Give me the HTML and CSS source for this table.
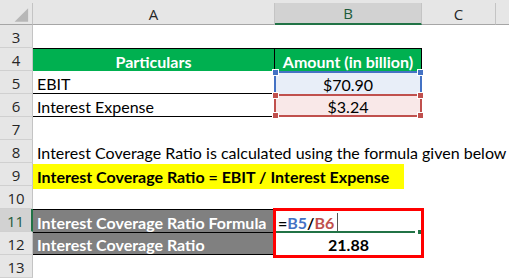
FILE: index.html
```html
<!DOCTYPE html>
<html>
<head>
<meta charset="utf-8">
<link rel="stylesheet" href="styles.css">
</head>
<body>
<div class="sheet">
  <div class="corner"><svg width="33" height="22" viewBox="0 0 33 22"><polygon points="29,5 29,19 15,19" fill="#b7b7b7"/></svg></div>
  <div class="colhead">A</div>
  <div class="colhead sel">B</div>
  <div class="colhead">C</div>
  <div class="colhead last"></div>

  <div class="rowhead">3</div><div class="cell"></div><div class="cell"></div><div class="cell"></div><div class="cell"></div>

  <div class="rowhead">4</div>
  <div class="cell green b-top b-right center bold">Particulars</div>
  <div class="cell green b-top b-right center bold">Amount (in billion)</div>
  <div class="cell"></div><div class="cell"></div>

  <div class="rowhead">5</div>
  <div class="cell b-bottom">EBIT</div>
  <div class="cell ref ref-blue center">$70.90<i class="h tl"></i><i class="h tr"></i></div>
  <div class="cell"></div><div class="cell"></div>

  <div class="rowhead">6</div>
  <div class="cell b-bottom">Interest Expense</div>
  <div class="cell ref ref-red center">$3.24<i class="h tl red"></i><i class="h tr red"></i><i class="h bl red"></i><i class="h br red"></i></div>
  <div class="cell"></div><div class="cell"></div>

  <div class="rowhead">7</div><div class="cell"></div><div class="cell"></div><div class="cell"></div><div class="cell"></div>

  <div class="rowhead">8</div>
  <div class="cell span4">Interest Coverage Ratio is calculated using the formula given below</div>

  <div class="rowhead">9</div>
  <div class="cell span4"><span class="yellow">Interest Coverage Ratio = EBIT / Interest Expense</span></div>

  <div class="rowhead">10</div><div class="cell"></div><div class="cell"></div><div class="cell"></div><div class="cell"></div>

  <div class="rowhead selrow">11</div>
  <div class="cell gray b-top bold">Interest Coverage Ratio Formula</div>
  <div class="cell box-top bold formula"><span>=</span><span class="fb">B5</span><span>/</span><span class="fr">B6</span><span class="caret"></span><i class="fill-handle"></i></div>
  <div class="cell"></div><div class="cell"></div>

  <div class="rowhead">12</div>
  <div class="cell gray b-top b-bottom bold">Interest Coverage Ratio</div>
  <div class="cell box-bottom bold center">21.88</div>
  <div class="cell"></div><div class="cell"></div>

  <div class="rowhead">13</div><div class="cell"></div><div class="cell"></div><div class="cell"></div><div class="cell"></div>
</div>
</body>
</html>
```

FILE: styles.css
```css
html, body {
  margin: 0;
  padding: 0;
  background: #ffffff;
}
body {
  font-family: Lato, "Open Sans", sans-serif;
  font-size: 16px;
  color: #000;
  overflow: hidden;
}
.sheet {
  display: grid;
  grid-template-columns: 33px 242px 147px 74px 13px;
  grid-template-rows: 22px repeat(11, 23px);
  border-top: 3px solid #e6e6e6;
  width: 509px;
}
.corner {
  background: #e6e6e6;
  border-right: 1px solid #c4c4c4;
  border-bottom: 1px solid #a6a6a6;
  box-sizing: border-box;
  display: flex;
}
.colhead {
  background: #e6e6e6;
  border-right: 1px solid #c4c4c4;
  border-bottom: 1px solid #a6a6a6;
  box-sizing: border-box;
  display: flex;
  align-items: center;
  justify-content: center;
  color: #262626;
  font-family: "Open Sans", sans-serif;
  font-size: 15px;
}
.colhead.sel {
  background: #d2d2d2;
  border-bottom: 2px solid #217346;
  color: #1e5b3a;
}
.colhead.last { border-right: none; }
.rowhead {
  background: #e6e6e6;
  border-right: 1px solid #c4c4c4;
  border-bottom: 1px solid #d0d0d0;
  box-sizing: border-box;
  display: flex;
  align-items: center;
  justify-content: center;
  color: #262626;
  font-family: "Open Sans", sans-serif;
  font-size: 15px;
  padding-top: 1px;
}
.rowhead.selrow {
  background: #d2d2d2;
  border-right: 2px solid #217346;
  color: #1e5b3a;
}
.cell {
  box-sizing: border-box;
  display: flex;
  align-items: center;
  padding: 2px 0 0 4px;
  white-space: nowrap;
  position: relative;
}
.span4 { grid-column: span 4; }
.center { justify-content: center; padding-left: 0; }
.bold { font-weight: 700; }
.green { background: #00b050; color: #fff; }
.gray { background: #808080; color: #fff; }
.b-top { border-top: 1px solid #000; }
.b-bottom { border-bottom: 1px solid #000; }
.b-right { border-right: 1px solid #000; }
.ref {
  margin-left: -1px;
  width: 148px;
}
.ref-blue {
  background: #e8eef8;
  border: 2px solid #4472c4;
  border-bottom: none;
}
.ref-red {
  background: #f9e8e8;
  border: 2px solid #c0504d;
}
.h {
  position: absolute;
  width: 5px;
  height: 5px;
  background: #4472c4;
  border: 1px solid #fff;
}
.h.red { background: #c0504d; }
.h.tl { left: -4px; top: -4px; }
.h.tr { right: -4px; top: -4px; }
.h.bl { left: -4px; bottom: -4px; }
.h.br { right: -4px; bottom: -4px; }
.yellow {
  display: flex;
  align-items: center;
  background: #ffff00;
  font-weight: 700;
  width: 367px;
  height: 25px;
  margin-left: -4px;
  padding-left: 4px;
  margin-top: 2px;
}
.box-top {
  border: 3px solid #ff0000;
  border-bottom: none;
  margin-left: -2px;
  margin-right: -2px;
  margin-top: -1px;
  padding-left: 2px;
}
.box-top::after {
  content: "";
  position: absolute;
  left: 0;
  right: 6px;
  bottom: -1px;
  height: 2px;
  background: #217346;
}
.fill-handle {
  position: absolute;
  right: 0;
  bottom: -2px;
  width: 3px;
  height: 4px;
  background: #217346;
}
.box-bottom {
  border: 3px solid #ff0000;
  border-top: none;
  margin-left: -2px;
  margin-right: -2px;
  margin-bottom: -3px;
}
.formula .fb { color: #4472c4; }
.formula .fr { color: #c0504d; }
.caret {
  width: 1px;
  height: 19px;
  background: #555;
  margin-left: 3px;
}
```
